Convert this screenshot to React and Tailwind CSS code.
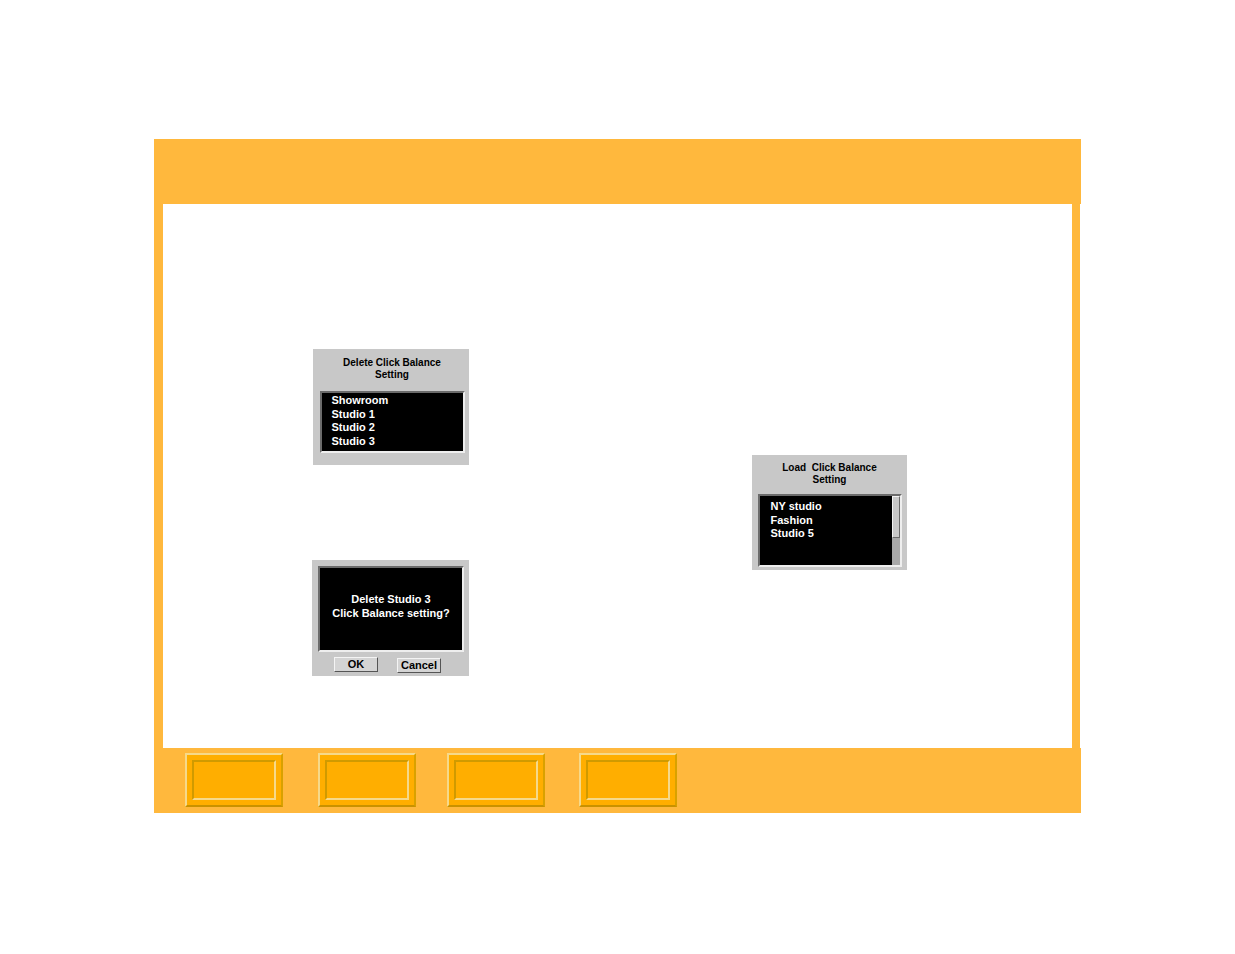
import React from "react";

const font = { fontFamily: '"Liberation Sans", Arial, sans-serif' };

const NavButton = () => (
  <div className="w-[98px] h-[54px] bg-[#ffae00] border-t-2 border-l-2 border-[#f6d98a] border-b-2 border-r-2 border-b-[#c99200] border-r-[#d9a100] p-[5px]">
    <div className="w-full h-full border-2 border-t-[#d09a00] border-l-[#d09a00] border-b-[#f6d98a] border-r-[#f6d98a] bg-[#ffae00]" />
  </div>
);

const ListBox = ({ items, scroll, className, pad }) => (
  <div className={`flex bg-black border-2 border-t-[#6b6b6b] border-l-[#6b6b6b] border-b-[#eeeeee] border-r-[#eeeeee] ${className}`}>
    <div className={`flex-1 flex flex-col text-white text-[11px] font-bold leading-[13.5px] ${pad}`}>
      {items.map((t) => (
        <div key={t}>{t}</div>
      ))}
    </div>
    {scroll && (
      <div className="w-[8px] bg-[#a8a8a8] flex flex-col">
        <div className="h-[42px] bg-[#c8c8c8] border border-t-[#f2f2f2] border-l-[#f2f2f2] border-b-[#6b6b6b] border-r-[#6b6b6b]" />
      </div>
    )}
  </div>
);

export default function App() {
  return (
    <div className="w-full h-[954px] bg-white pt-[139px] pl-[154px]" style={font}>
      <div className="w-[927px] flex flex-col">
        <div className="h-[65px] bg-[#ffb83d]" />
        <div className="h-[544px] flex">
          <div className="w-[9px] bg-[#ffb83d]" />
          <div className="w-[909px] bg-white flex">
            {/* left column */}
            <div className="ml-[149px] w-[157px] flex flex-col">
              <div className="mt-[145px] ml-[1px] w-[156px] h-[116px] bg-[#c8c8c8] flex flex-col items-center pt-[8px]">
                <div className="text-[10px] font-bold text-black leading-[12px] text-center whitespace-pre ml-[2px]">
                  {"Delete Click Balance\nSetting"}
                </div>
                <ListBox
                  className="mt-[10px] w-[145px] h-[62px] ml-[2px]"
                  pad="pt-[1px] pl-[10px]"
                  items={["Showroom", "Studio 1", "Studio 2", "Studio 3"]}
                />
              </div>
              <div className="mt-[95px] w-[157px] h-[116px] bg-[#c8c8c8] flex flex-col pt-[6px] pl-[6px]">
                <div className="w-[146px] h-[86px] bg-black border-2 border-t-[#6b6b6b] border-l-[#6b6b6b] border-b-[#eeeeee] border-r-[#eeeeee] flex flex-col items-center pt-[24px] text-white text-[11px] font-bold leading-[14px] text-center">
                  <div>Delete Studio 3</div>
                  <div>Click Balance setting?</div>
                </div>
                <div className="flex gap-[19px] mt-[5px] ml-[16px]">
                  <div className="w-[44px] h-[15px] bg-[#d4d4d4] border border-t-[#f4f4f4] border-l-[#f4f4f4] border-b-[#555] border-r-[#555] text-[11px] font-bold leading-[13px] text-center">
                    OK
                  </div>
                  <div className="w-[44px] h-[15px] mt-[1px] bg-[#d4d4d4] border border-t-[#f4f4f4] border-l-[#f4f4f4] border-b-[#555] border-r-[#555] text-[11px] font-bold leading-[13px] text-center">
                    Cancel
                  </div>
                </div>
              </div>
            </div>
            {/* right column */}
            <div className="ml-[283px] mt-[251px] w-[155px] h-[115px] bg-[#c8c8c8] flex flex-col items-center pt-[7px]">
              <div className="text-[10px] font-bold text-black leading-[12px] text-center whitespace-pre">
                {"Load  Click Balance\nSetting"}
              </div>
              <ListBox
                scroll
                className="mt-[8px] w-[144px] h-[73px]"
                pad="pt-[4px] pl-[11px]"
                items={["NY studio", "Fashion", "Studio 5"]}
              />
            </div>
          </div>
          <div className="w-[8px] bg-[#ffb83d]" />
        </div>
        <div className="h-[65px] bg-[#ffb83d] flex items-start pt-[5px] pl-[31px]">
          <NavButton />
          <div className="ml-[35px]">
            <NavButton />
          </div>
          <div className="ml-[31px]">
            <NavButton />
          </div>
          <div className="ml-[34px]">
            <NavButton />
          </div>
        </div>
      </div>
    </div>
  );
}
